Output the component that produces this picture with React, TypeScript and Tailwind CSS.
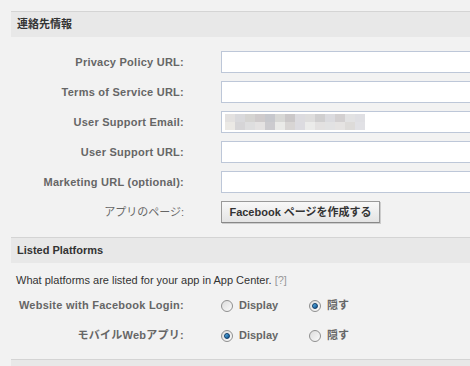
import React from 'react';

const font = { fontFamily: '"Liberation Sans", "Noto Sans CJK JP", sans-serif' };

const shades = [
  ['#e3e1e0', '#d9d9dc', '#d5d4d2', '#cfcbcc', '#c7c8cd', '#d8d8d6', '#cbc8c9', '#dcdbdf', '#dedddd', '#d0cfd0', '#dbdbdf', '#d3d0d1', '#e2e2e3', '#dfdfe3'],
  ['#ebe9e5', '#d6d5d7', '#dededf', '#e4e2e2', '#cccbcf', '#eaeae8', '#d8d5d4', '#dcdbe0', '#ebebea', '#e3e1e1', '#e2e2e3', '#e5e3e2', '#dddbd9', '#e1e1e5'],
];

const Header: React.FC<{ title: string }> = ({ title }) => (
  <div className="h-[26px] border-t border-[#d4d4d4] bg-[#e8e8e8] pl-[6px] flex items-center text-[11px] font-bold text-[#333]">
    {title}
  </div>
);

const Label: React.FC<{ children: React.ReactNode; bold?: boolean }> = ({ children, bold = true }) => (
  <div className={`w-[173px] shrink-0 text-right text-[11px] text-[#666] ${bold ? 'font-bold tracking-[0.25px]' : ''}`}>{children}</div>
);

const Input: React.FC<{ blurred?: boolean }> = ({ blurred }) => (
  <div className="ml-[37px] h-[22px] w-[300px] shrink-0 border border-[#bdc7d8] bg-white flex items-center pl-[3px]">
    {blurred && (
      <div className="flex flex-col">
        {shades.map((row, i) => (
          <div key={i} className="flex">
            {row.map((c, j) => (
              <div key={j} className="w-[10px] h-[8px]" style={{ background: c }} />
            ))}
          </div>
        ))}
      </div>
    )}
  </div>
);

const Radio: React.FC<{ checked?: boolean }> = ({ checked }) => (
  <div className="w-[12px] h-[12px] rounded-full border border-[#8f8f8f] bg-gradient-to-br from-[#dcdcdc] to-[#fafafa] flex items-center justify-center">
    {checked && <div className="w-[6px] h-[6px] rounded-full bg-gradient-to-br from-[#5bb6ec] to-[#0b4f8a] border border-[#0e3a66]" />}
  </div>
);

const RadioRow: React.FC<{ label: string; value: 'display' | 'hide' }> = ({ label, value }) => (
  <div className="flex items-center h-[22px]">
    <Label>{label}</Label>
    <div className="ml-[37px] flex items-center w-[88px] shrink-0">
      <Radio checked={value === 'display'} />
      <span className="ml-[6px] text-[11px] font-bold text-[#666]">Display</span>
    </div>
    <div className="flex items-center">
      <Radio checked={value === 'hide'} />
      <span className="ml-[6px] text-[11px] font-bold text-[#666]">隠す</span>
    </div>
  </div>
);

export default function App() {
  return (
    <div className="w-[470px] h-[366px] overflow-hidden bg-[#f2f2f2] pl-[11px] pt-[11px]" style={font}>
      <Header title="連絡先情報" />
      <div className="mt-[14px] flex flex-col gap-[8px]">
        <div className="flex items-center"><Label>Privacy Policy URL:</Label><Input /></div>
        <div className="flex items-center"><Label>Terms of Service URL:</Label><Input /></div>
        <div className="flex items-center"><Label>User Support Email:</Label><Input blurred /></div>
        <div className="flex items-center"><Label>User Support URL:</Label><Input /></div>
        <div className="flex items-center"><Label>Marketing URL (optional):</Label><Input /></div>
        <div className="flex items-center">
          <Label bold={false}>アプリのページ:</Label>
          <button className="ml-[37px] h-[22px] w-[159px] shrink-0 border border-[#999] border-b-[#888] bg-gradient-to-b from-[#f8f8f8] to-[#e4e4e4] text-[11px] font-bold text-[#333] shadow-[1px_1px_0_#ccc]">
            Facebook ページを作成する
          </button>
        </div>
      </div>
      <div className="mt-[14px]">
        <Header title="Listed Platforms" />
      </div>
      <div className="mt-[9px] pl-[5px] text-[11px] text-[#333]">
        What platforms are listed for your app in App Center. <span className="text-[#999]">[?]</span>
      </div>
      <div className="mt-[6px] flex flex-col gap-[8px]">
        <RadioRow label="Website with Facebook Login:" value="hide" />
        <RadioRow label="モバイルWebアプリ:" value="display" />
      </div>
      <div className="mt-[12px] h-[26px] border-t border-[#d4d4d4] bg-[#e8e8e8]" />
    </div>
  );
}
